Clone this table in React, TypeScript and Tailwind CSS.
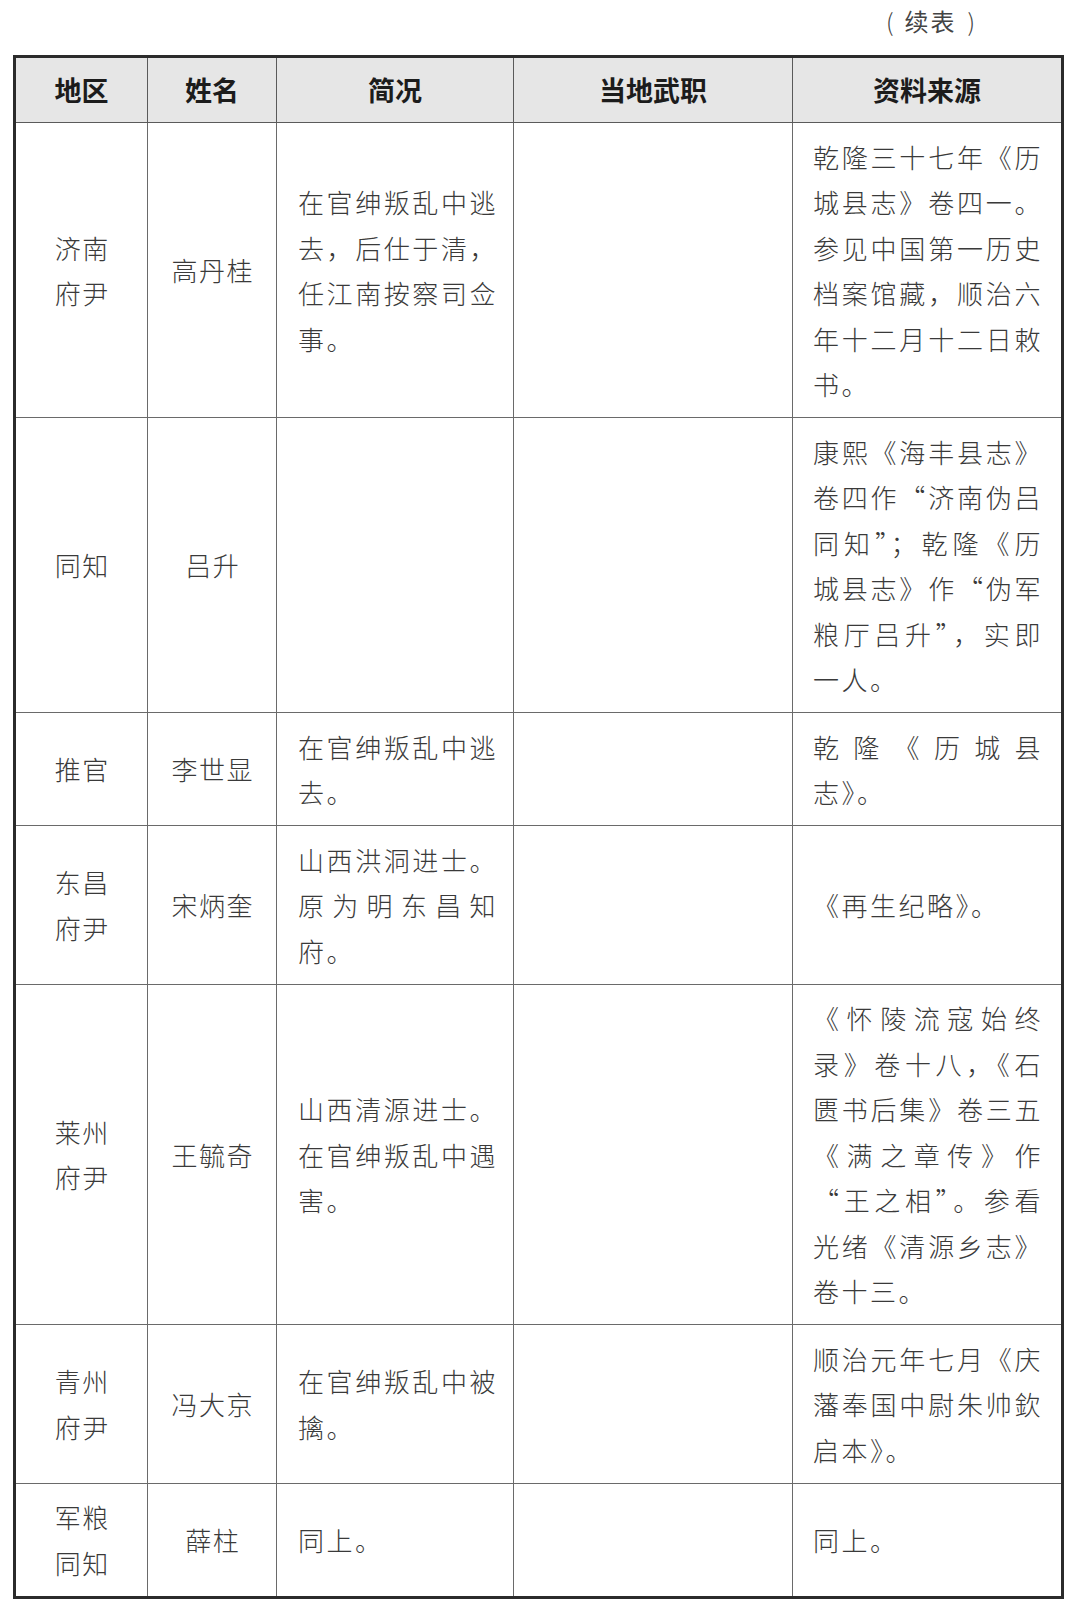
import React from 'react';

type Row = {
  region: string[];
  name: string;
  brief: string[];
  post: string[];
  source: string[];
};

const rows: Row[] = [
  {
    region: ['济南', '府尹'],
    name: '高丹桂',
    brief: ['在官绅叛乱中逃', '去，后仕于清，', '任江南按察司佥', '事。'],
    post: [],
    source: ['乾隆三十七年《历', '城县志》卷四一。', '参见中国第一历史', '档案馆藏，顺治六', '年十二月十二日敕', '书。'],
  },
  {
    region: ['同知'],
    name: '吕升',
    brief: [],
    post: [],
    source: ['康熙《海丰县志》', '卷四作“济南伪吕', '同知”；乾隆《历', '城县志》作“伪军', '粮厅吕升”，实即', '一人。'],
  },
  {
    region: ['推官'],
    name: '李世显',
    brief: ['在官绅叛乱中逃', '去。'],
    post: [],
    source: ['乾隆《历城县', '志》。'],
  },
  {
    region: ['东昌', '府尹'],
    name: '宋炳奎',
    brief: ['山西洪洞进士。', '原为明东昌知', '府。'],
    post: [],
    source: ['《再生纪略》。'],
  },
  {
    region: ['莱州', '府尹'],
    name: '王毓奇',
    brief: ['山西清源进士。', '在官绅叛乱中遇', '害。'],
    post: [],
    source: ['《怀陵流寇始终', '录》卷十八，《石', '匮书后集》卷三五', '《满之章传》作', '“王之相”。参看', '光绪《清源乡志》', '卷十三。'],
  },
  {
    region: ['青州', '府尹'],
    name: '冯大京',
    brief: ['在官绅叛乱中被', '擒。'],
    post: [],
    source: ['顺治元年七月《庆', '藩奉国中尉朱帅欽', '启本》。'],
  },
  {
    region: ['军粮', '同知'],
    name: '薛柱',
    brief: ['同上。'],
    post: [],
    source: ['同上。'],
  },
];

const headers = ['地区', '姓名', '简况', '当地武职', '资料来源'];

// justified lines, except the paragraph's last one
function Lines({ lines }: { lines: string[] }) {
  return (
    <>
      {lines.map((l, i) => (
        <div
          key={i}
          className={i < lines.length - 1 ? 'text-justify [text-align-last:justify]' : 'text-left'}
        >
          {l}
        </div>
      ))}
    </>
  );
}

export default function App() {
  return (
    <div className="w-[1072px] min-h-[1606px] bg-white font-['Noto_Sans_CJK_SC','Noto_Sans_CJK_JP',sans-serif] text-[#3a3a3a]">
      <div className="h-[55px] flex justify-end items-start pr-[97px] pt-[6px]">
        <div className="flex items-center gap-[11px] text-[24px] leading-[30px] text-[#444]">
          <span className="font-light">(</span>
          <span className="tracking-[2px]">续表</span>
          <span className="font-light">)</span>
        </div>
      </div>

      <div className="ml-[13px] w-[1051px] border-[3px] border-[#2b2b2b]">
        <div className="grid grid-cols-[132px_129px_237px_279px_268px]">
          {headers.map((h, i) => (
            <div
              key={h}
              className={
                'h-[65px] flex items-center justify-center bg-[#e6e6e6] border-b border-[#5a5a5a] text-[27px] font-bold text-[#1c1c1c] ' +
                (i < headers.length - 1 ? 'border-r' : '')
              }
            >
              {h}
            </div>
          ))}

          {rows.map((r, ri) => {
            const last = ri === rows.length - 1;
            const line = last ? 'border-[#6a6a6a] ' : 'border-b border-[#6a6a6a] ';
            const cell = line + 'py-[10.5px] text-[26px] leading-[45.5px] font-light flex flex-col justify-center ';
            return (
              <React.Fragment key={ri}>
                <div className={cell + 'border-r items-center tracking-[1.5px] pl-[1.5px]'}>
                  {r.region.map((t) => (
                    <div key={t}>{t}</div>
                  ))}
                </div>
                <div className={cell + 'border-r items-center tracking-[1.5px] pl-[1.5px]'}>
                  <div>{r.name}</div>
                </div>
                <div className={cell + 'border-r pl-[21px] tracking-[2.5px]'}>
                  <div className="w-[200px]">
                    <Lines lines={r.brief} />
                  </div>
                </div>
                <div className={cell + 'border-r'}>
                  <Lines lines={r.post} />
                </div>
                <div className={cell + 'pl-[20px] tracking-[2.5px]'}>
                  <div className="w-[230px]">
                    <Lines lines={r.source} />
                  </div>
                </div>
              </React.Fragment>
            );
          })}
        </div>
      </div>
    </div>
  );
}
